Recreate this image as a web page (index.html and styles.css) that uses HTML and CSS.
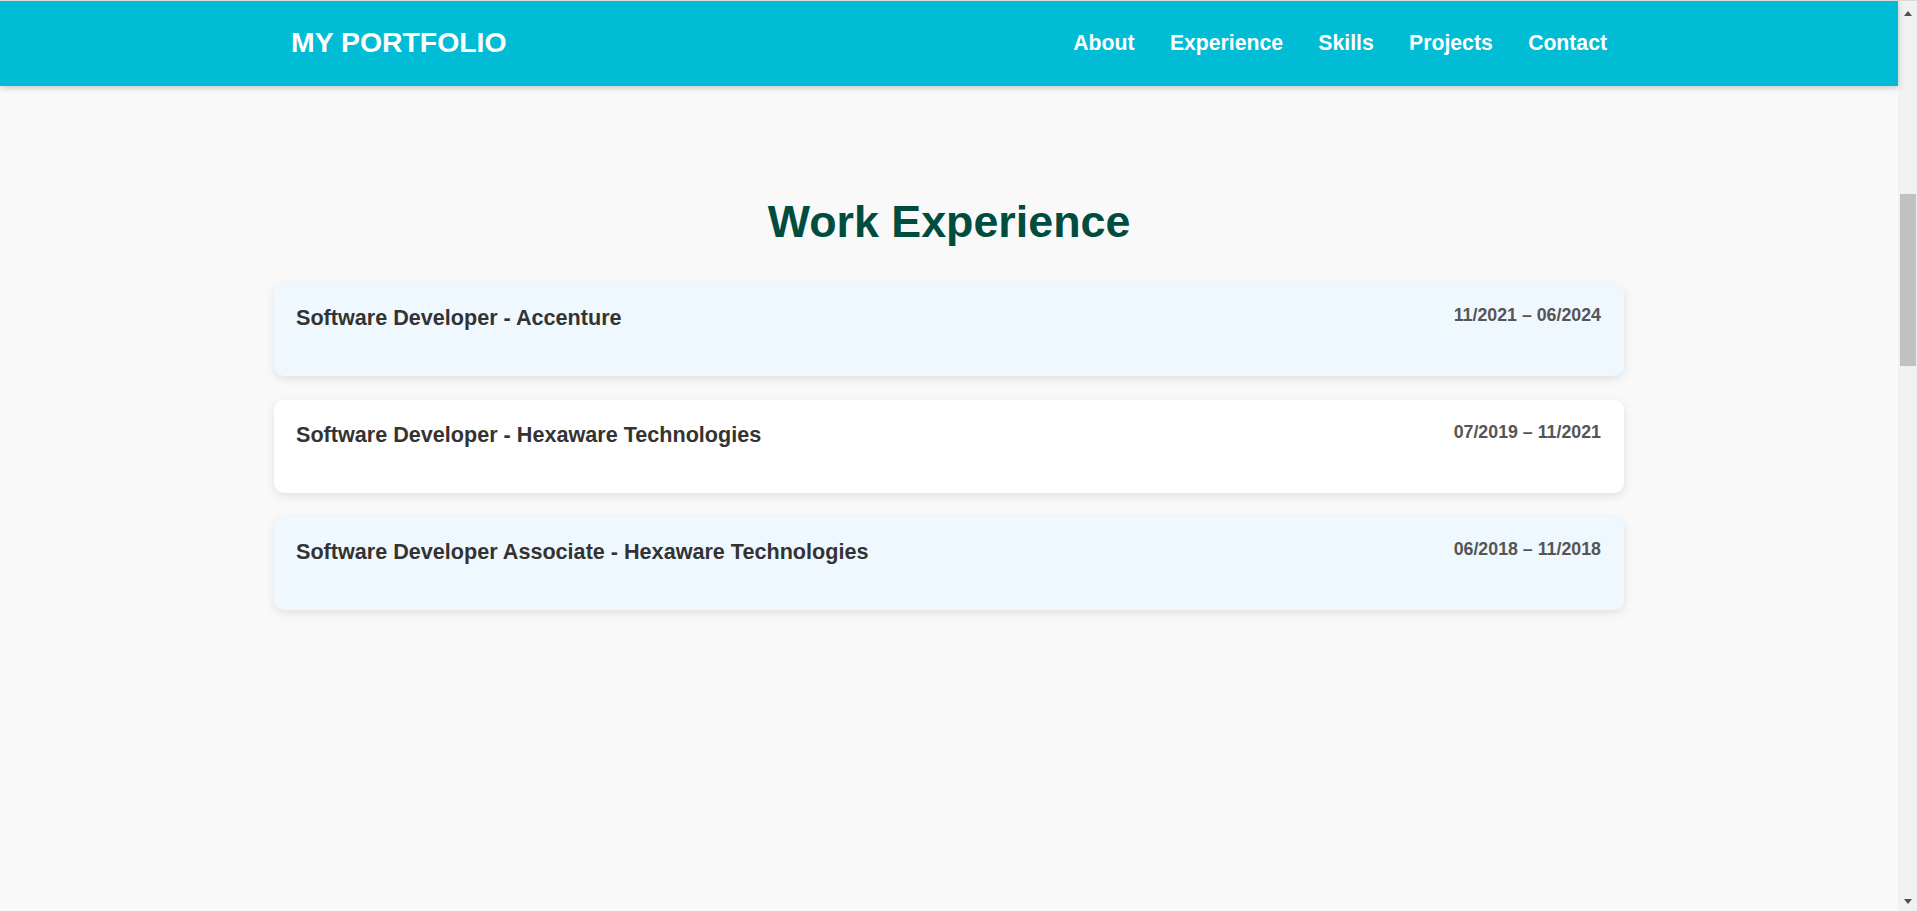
FILE: index.html
```html
<!DOCTYPE html>
<html lang="en">
<head>
<meta charset="utf-8">
<title>My Portfolio</title>
<link rel="stylesheet" href="styles.css">
</head>
<body>
<div class="page">
  <header class="site-header">
    <div class="header-inner">
      <a class="logo" href="#">MY PORTFOLIO</a>
      <nav class="nav">
        <a href="#about">About</a>
        <a href="#experience">Experience</a>
        <a href="#skills">Skills</a>
        <a href="#projects">Projects</a>
        <a href="#contact">Contact</a>
      </nav>
    </div>
  </header>
  <main>
    <section class="experience" id="experience">
      <h2 class="section-title">Work Experience</h2>
      <div class="job-list">
        <article class="job">
          <div class="job-head">
            <h3 class="job-title">Software Developer - Accenture</h3>
            <span class="job-date">11/2021 – 06/2024</span>
          </div>
        </article>
        <article class="job">
          <div class="job-head">
            <h3 class="job-title">Software Developer - Hexaware Technologies</h3>
            <span class="job-date">07/2019 – 11/2021</span>
          </div>
        </article>
        <article class="job">
          <div class="job-head">
            <h3 class="job-title">Software Developer Associate - Hexaware Technologies</h3>
            <span class="job-date">06/2018 – 11/2018</span>
          </div>
        </article>
      </div>
    </section>
  </main>
</div>
<div class="scrollbar" aria-hidden="true">
  <div class="sb-btn"><span class="arrow-up"></span></div>
  <div class="sb-track"><div class="sb-thumb"></div></div>
  <div class="sb-btn"><span class="arrow-down"></span></div>
</div>
</body>
</html>
```
FILE: styles.css
```css
html, body {
  margin: 0;
  padding: 0;
}
body {
  background: #f9f9f9;
  font-family: "Liberation Sans", Arial, sans-serif;
  color: #333;
  height: 911px;
  overflow: hidden;
  border-top: 1px solid #dadada;
  box-sizing: border-box;
  display: flex;
}
.page {
  flex: 1;
  min-width: 0;
}
.site-header {
  background: #00bcd4;
  height: 85px;
  box-shadow: 0 2px 6px rgba(0, 0, 0, 0.2);
  position: relative;
  z-index: 1;
}
.header-inner {
  width: 1350px;
  margin: 0 auto;
  padding: 0 17px 2px;
  box-sizing: border-box;
  height: 100%;
  display: flex;
  align-items: center;
  justify-content: space-between;
}
.logo {
  color: #fff;
  text-decoration: none;
  font-weight: bold;
  font-size: 28.4px;
}
.nav {
  display: flex;
  gap: 35.4px;
}
.nav a {
  color: #fff;
  text-decoration: none;
  font-weight: bold;
  font-size: 21.2px;
}
.experience {
  width: 1350px;
  margin: 0 auto;
  padding-top: 110px;
}
.section-title {
  margin: 0 0 36px;
  text-align: center;
  font-size: 44.8px;
  color: #004d40;
  font-weight: bold;
}
.job-list {
  display: flex;
  flex-direction: column;
  gap: 24px;
}
.job {
  background: #fff;
  border-radius: 10px;
  box-shadow: 0 3px 10px rgba(0, 0, 0, 0.1);
  padding: 22px 23px 45px 22px;
}
.job:nth-child(odd) {
  background: #f0f8ff;
}
.job-head {
  display: flex;
  justify-content: space-between;
  align-items: flex-start;
}
.job-title {
  margin: 0;
  font-size: 21.6px;
  color: #333;
}
.job-date {
  font-size: 17.8px;
  font-weight: bold;
  color: #555;
}

/* window scrollbar */
.scrollbar {
  width: 19px;
  flex: none;
  background: #f1f1f1;
  display: flex;
  flex-direction: column;
}
.sb-btn {
  height: 18px;
  display: flex;
  align-items: center;
  justify-content: center;
  padding-left: 1px;
}
.arrow-up {
  width: 0;
  height: 0;
  border-left: 4px solid transparent;
  border-right: 4px solid transparent;
  border-bottom: 5px solid #505050;
  margin-top: 6px;
}
.arrow-down {
  width: 0;
  height: 0;
  border-left: 4px solid transparent;
  border-right: 4px solid transparent;
  border-top: 5px solid #505050;
  margin-bottom: 2px;
}
.sb-track {
  flex: 1;
  padding: 175px 1px 0 2px;
}
.sb-thumb {
  height: 172px;
  background: #c1c1c1;
}
```
